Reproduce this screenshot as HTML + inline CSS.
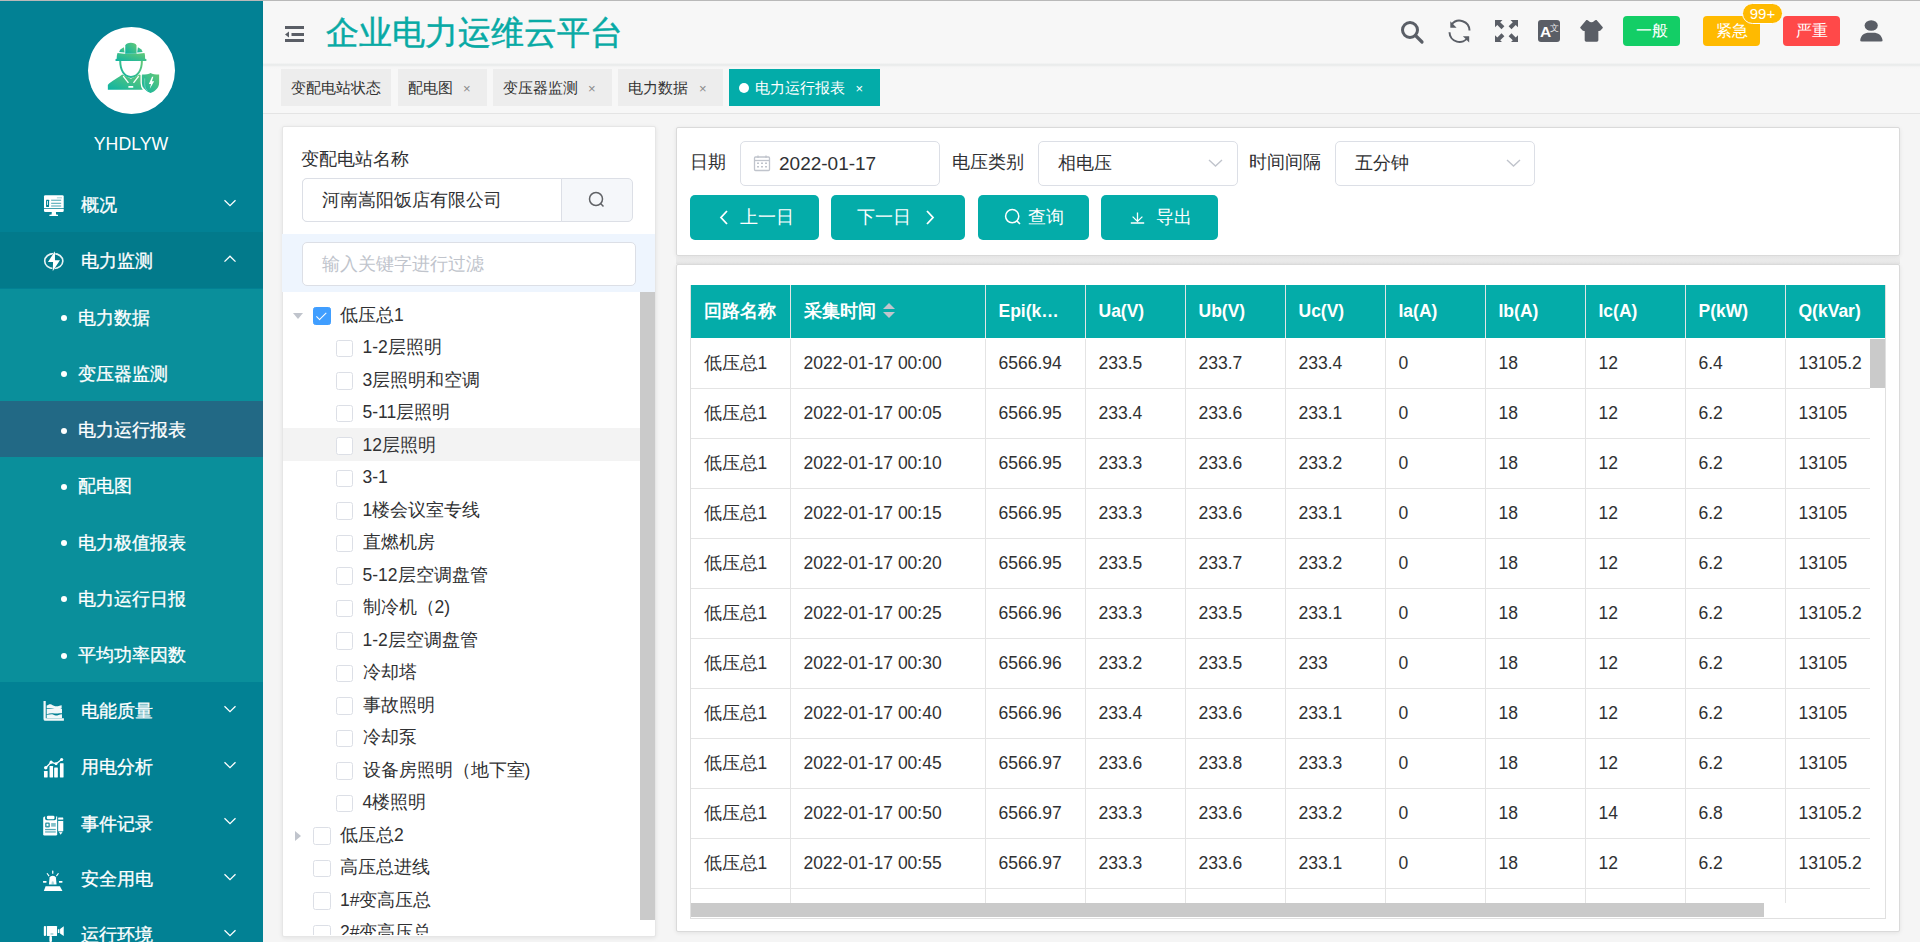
<!DOCTYPE html>
<html><head><meta charset="utf-8"><title>企业电力运维云平台</title>
<style>
*{box-sizing:border-box;margin:0;padding:0}
html,body{width:1920px;height:942px;overflow:hidden}
body{font-family:"Liberation Sans",sans-serif;background:#f5f5f5;position:relative;color:#303133}
#topline{position:absolute;left:0;top:0;width:1920px;height:1px;background:#b9b9b9;z-index:50}
/* sidebar */
#side{position:absolute;left:0;top:0;width:263px;height:942px;background:#028194;color:#fff;overflow:hidden}
#side .avatar{position:absolute;left:88px;top:26.5px;width:87px;height:87px;border-radius:50%;background:#fff}
#side .av{position:absolute;left:85px;top:24px;width:94px;height:94px}
#side .uname{position:absolute;left:0;width:263px;top:133px;text-align:center;font-size:17.7px;line-height:22px;padding-right:1px}
.mi{position:absolute;left:0;width:263px;height:56.25px}
.mi .t{position:absolute;left:81px;top:1px;line-height:56px;font-size:17.5px;white-space:nowrap;-webkit-text-stroke:.3px #fff}
.mi svg.ic{position:absolute;left:40px;top:14px;width:30px;height:30px}
.mi svg.ar{position:absolute;left:222px;top:21.6px;width:16px;height:10px}
.sub{background:#0a8f9b}
.sub .t{left:78px}
.sub .dot{position:absolute;left:61px;top:26.5px;width:6px;height:6px;border-radius:50%;background:#fff}
/* header */
#header{position:absolute;left:263px;top:1px;width:1657px;height:63px;background:#f7f7f7;box-shadow:0 1px 3px rgba(0,0,0,.08)}
#header .title{position:absolute;left:63px;top:12px;font-size:33px;line-height:40px;color:#08aaa5;white-space:nowrap;-webkit-text-stroke:.5px #08aaa5}
#tabsbar{position:absolute;left:263px;top:63px;width:1657px;height:51px;background:linear-gradient(#f7f7f7 0,#eceeee 1px,#e8eaea 2px,#eff0f0 3px,#f6f6f6 4px,#f7f7f7 6px);border-bottom:1px solid #e4e4e4}
.tab{position:absolute;top:69px;height:37px;background:#ededed;font-size:15px;line-height:37px;color:#333;padding-left:10px;white-space:nowrap}
.tab .x{position:absolute;top:1px;font-size:13px;color:#8a8a8a}
.hbtn{position:absolute;top:15px;height:30px;width:57px;border-radius:4px;color:#fff;font-size:16px;line-height:30px;text-align:center}
/* cards */
.card{position:absolute;background:#fff;border:1px solid #dfdfdf;border-radius:2px;box-shadow:0 1px 4px rgba(0,0,0,.08)}
.lbl{position:absolute;font-size:17.5px;line-height:22px;color:#303133;white-space:nowrap}
.inp{position:absolute;background:#fff;border:1px solid #dcdfe6;border-radius:5px;font-size:17.5px;color:#303133;white-space:nowrap}
/* tree */
.tree{position:absolute;left:282px;top:292px;width:358px;height:642.5px;overflow:hidden}
.tn{position:absolute;left:0;width:358px;height:32.5px}
.tn .hov{position:absolute;left:1px;top:-2px;width:357px;height:33.5px;background:#f3f3f3}
.tri{position:absolute;top:13px;width:0;height:0}
.tri.down{border-left:5px solid transparent;border-right:5px solid transparent;border-top:6px solid #c0c4cc;top:13.5px}
.tri.right{border-top:5px solid transparent;border-bottom:5px solid transparent;border-left:6px solid #c0c4cc;top:11px}
.cb{position:absolute;top:7.5px;width:17.5px;height:17.5px;border:1px solid #dcdfe6;border-radius:2.5px;background:#fff}
.cb.on{background:#409eff;border-color:#409eff}
.cb.on:after{content:"";position:absolute;left:5px;top:1.5px;width:4px;height:8.5px;border:1.5px solid #fff;border-left:0;border-top:0;transform:rotate(45deg)}
.tt{position:absolute;top:-1px;line-height:32.5px;font-size:17.5px;color:#303133;white-space:nowrap}
.tscroll{position:absolute;left:640px;top:292px;width:15px;height:628px;background:#cacaca}
/* buttons */
.btn{position:absolute;top:195px;height:45px;background:#04aca9;border-radius:5px;color:#fff;font-size:17.5px;line-height:45px;white-space:nowrap}
/* table */
.tbl{position:absolute;left:690px;top:284.5px;width:1196px;height:634px;background:#fff;overflow:hidden}
.tbl .bl{position:absolute;left:0;top:0;width:1px;height:634px;background:#e0e0e0}
.tbl .br{position:absolute;left:1195px;top:0;width:1px;height:634px;background:#e0e0e0}
.tbl .bb{position:absolute;left:0;top:633px;width:1196px;height:1px;background:#e0e0e0}
.thead{position:absolute;left:0;top:0;width:1196px;height:53.5px;background:#04aca9}
.th{position:absolute;top:0;height:53.5px;color:#fff;font-weight:bold;font-size:17.5px;line-height:53px;padding-left:13.5px;white-space:nowrap}
.thl{position:absolute;top:0;width:1px;height:53.5px;background:#e2e6e6}
.sort{position:absolute;left:93px;top:18.5px;width:12px;height:16px}
.sort i{position:absolute;left:0;width:0;height:0;border-left:6px solid transparent;border-right:6px solid transparent}
.sort i.up{top:0;border-bottom:6px solid #c0c4cc}
.sort i.dn{top:9px;border-top:6px solid #c0c4cc}
.tbody{position:absolute;left:0;top:54.5px;width:1196px;height:564px;overflow:hidden}
.tr{position:absolute;left:0;width:1180px;height:50px;border-bottom:1px solid #e4e4e4}
.td{position:absolute;top:0;height:50px;line-height:49px;font-size:17.5px;color:#303133;padding-left:13.5px;white-space:nowrap}
.vl{position:absolute;top:0;width:1px;height:565px;background:#e4e4e4}
.vthumb{position:absolute;left:1180px;top:0;width:15px;height:49px;background:#cacaca}
.hscroll{position:absolute;left:1px;top:618.5px;width:1073px;height:14px;background:#cacaca}

</style></head><body>
<div id="topline"></div>
<div id="side">
  <div class="avatar"></div>
  <svg class="av" viewBox="0 0 942 942">
    <defs><linearGradient id="g1" x1="0" y1="1" x2="1" y2="0"><stop offset="0" stop-color="#0db3a3"/><stop offset="1" stop-color="#66c976"/></linearGradient></defs>
    <g fill="url(#g1)">
      <path d="M306,350 L318,348 C318,322 320,305 326,290 L392,297 L398,299 L522,299 L528,297 L596,290 C602,305 602,322 602,348 L615,350 L615,372 L306,372 Z"/>
      <path d="M403,297 L404,215 C410,195 430,187 460,187 C490,187 510,195 516,215 L517,297 Z"/>
      <path d="M343,280 C347,260 365,243 390,232 L397,285 Z"/>
      <path d="M577,280 C573,260 555,243 530,232 L523,285 Z"/>
      <path d="M343,371 C343,462 385,540 460,540 C537,540 580,462 580,371 L560,371 C560,450 527,520 460,520 C396,520 363,450 363,371 Z"/>
      <path d="M229,658 L229,612 C245,585 300,562 373,507 L460,548 L548,507 C563,514 573,518 585,522 L585,658 Z"/>
      <path d="M572,507 C610,507 640,500 657,490 C675,500 705,507 743,507 L743,587 C743,640 705,676 657,692 C610,676 572,640 572,587 Z"/>
    </g>
    <g stroke="#fff" fill="none">
      <path d="M383,522 L435,590" stroke-width="13"/><path d="M538,522 L486,590" stroke-width="13"/>
      <path d="M563,498 L563,590 C563,642 600,684 652,704" stroke-width="13"/>
      <path d="M598,545 L598,598 C598,636 612,660 632,676" stroke-width="5" opacity=".6"/>
    </g>
    <rect x="434" y="622" width="50" height="18" rx="5" fill="#fff"/>
    <path d="M672,528 L640,602 L661,602 L650,648 L693,574 L671,574 L685,528 Z" fill="#fff"/>
  </svg>
  <div class="uname">YHDLYW</div>

  <div class="mi" style="top:176px">
    <svg class="ic" viewBox="0 0 942 942"><g fill="#fff">
      <path d="M165,165 L705,165 Q745,165 745,205 L745,570 L125,570 L125,205 Q125,165 165,165 Z"/>
      <path d="M125,595 L745,595 L745,650 Q745,690 705,690 L165,690 Q125,690 125,650 Z"/>
      <path d="M370,690 L500,690 L505,770 L565,775 L565,815 L295,815 L295,775 L365,770 Z"/>
      </g><g fill="#028194">
      <rect x="190" y="310" width="95" height="220" rx="15"/>
      <rect x="350" y="305" width="315" height="32" opacity=".7"/>
      <rect x="350" y="400" width="315" height="38" opacity=".6"/>
      <rect x="350" y="480" width="315" height="45" opacity=".5"/>
      <rect x="530" y="228" width="160" height="35" opacity=".35"/>
      </g><rect x="225" y="345" width="25" height="125" fill="#fff"/>
    </svg>
    <span class="t">概况</span>
    <svg class="ar" viewBox="0 0 16 10"><path d="M2.5,2.2 L8,7.6 L13.5,2.2" stroke="#fff" stroke-width="1.3" fill="none"/></svg>
  </div>
  <div class="mi" style="top:232px;background:#027a8b">
    <svg class="ic" viewBox="0 0 942 942">
      <ellipse cx="432" cy="472" rx="285" ry="235" stroke="#fff" stroke-width="52" fill="none" opacity=".9"/>
      <path d="M480,140 L215,520 L395,520 L385,820 L660,430 L480,430 Z" fill="#027a8b"/>
      <path d="M470,165 L250,500 L410,500 L400,790 L625,450 L470,450 Z" fill="#fff"/>
    </svg>
    <span class="t">电力监测</span>
    <svg class="ar" viewBox="0 0 16 10"><path d="M2.5,7.6 L8,2.2 L13.5,7.6" stroke="#fff" stroke-width="1.3" fill="none"/></svg>
  </div>
  <div class="mi sub" style="top:288.5px"><span class="dot"></span><span class="t">电力数据</span></div>
  <div class="mi sub" style="top:344.75px"><span class="dot"></span><span class="t">变压器监测</span></div>
  <div class="mi sub" style="top:401px;background:#226985"><span class="dot"></span><span class="t">电力运行报表</span></div>
  <div class="mi sub" style="top:457.25px"><span class="dot"></span><span class="t">配电图</span></div>
  <div class="mi sub" style="top:513.5px"><span class="dot"></span><span class="t">电力极值报表</span></div>
  <div class="mi sub" style="top:569.75px"><span class="dot"></span><span class="t">电力运行日报</span></div>
  <div class="mi sub" style="top:626px"><span class="dot"></span><span class="t">平均功率因数</span></div>

  <div class="mi" style="top:682px">
    <svg class="ic" viewBox="0 0 942 942"><g fill="#fff" opacity=".95">
      <path d="M110,160 L180,160 L180,700 L750,700 L750,780 L170,780 Q110,780 110,720 Z"/>
      <path d="M210,300 C260,270 310,240 360,265 C420,300 470,330 560,320 C600,315 620,290 680,290 L680,390 C600,420 520,430 460,410 C380,380 300,380 210,385 Z"/>
      <path d="M210,410 L690,410 L690,545 C640,540 600,545 560,550 C500,560 440,540 380,545 C320,550 270,555 210,570 Z"/>
      <path d="M210,590 C270,585 320,580 370,575 C430,570 450,620 500,615 C560,610 600,580 690,570 L690,690 L210,690 Z"/>
    </g></svg>
    <span class="t">电能质量</span>
    <svg class="ar" viewBox="0 0 16 10"><path d="M2.5,2.2 L8,7.6 L13.5,2.2" stroke="#fff" stroke-width="1.3" fill="none"/></svg>
  </div>
  <div class="mi" style="top:738.25px">
    <svg class="ic" viewBox="0 0 942 942"><g fill="#fff">
      <rect x="125" y="600" width="115" height="200" rx="12"/>
      <rect x="300" y="440" width="110" height="360" rx="12"/>
      <rect x="445" y="490" width="115" height="310" rx="12"/>
      <rect x="625" y="350" width="115" height="450" rx="12"/>
      <circle cx="180" cy="495" r="55"/><circle cx="350" cy="320" r="50"/><circle cx="505" cy="370" r="45"/><circle cx="680" cy="235" r="50"/>
      </g><path d="M180,495 L350,320 L505,370 L680,235" stroke="#fff" stroke-width="40" fill="none" stroke-linejoin="round"/>
    </svg>
    <span class="t">用电分析</span>
    <svg class="ar" viewBox="0 0 16 10"><path d="M2.5,2.2 L8,7.6 L13.5,2.2" stroke="#fff" stroke-width="1.3" fill="none"/></svg>
  </div>
  <div class="mi" style="top:794.5px">
    <svg class="ic" viewBox="0 0 942 942"><g fill="#fff">
      <path d="M150,235 L540,235 L540,790 Q540,830 500,830 L140,830 Q100,830 100,790 L100,285 Q100,235 150,235 Z"/>
      <rect x="570" y="270" width="160" height="70" rx="10"/>
      <path d="M570,370 L730,370 L730,690 L650,810 L570,690 Z"/>
      </g><g fill="#028194">
      <rect x="160" y="190" width="345" height="165" rx="55"/>
      <rect x="160" y="420" width="150" height="160" rx="40" opacity=".8"/>
      <rect x="350" y="440" width="145" height="115" opacity=".5"/>
      <rect x="160" y="625" width="335" height="40" opacity=".7"/>
      <rect x="160" y="695" width="335" height="50" opacity=".5"/>
      <rect x="570" y="340" width="160" height="30"/>
      <rect x="570" y="690" width="160" height="40" opacity=".6"/>
      </g><g fill="#fff">
      <rect x="215" y="215" width="240" height="110" rx="40"/>
      <circle cx="235" cy="500" r="35"/>
    </g></svg>
    <span class="t">事件记录</span>
    <svg class="ar" viewBox="0 0 16 10"><path d="M2.5,2.2 L8,7.6 L13.5,2.2" stroke="#fff" stroke-width="1.3" fill="none"/></svg>
  </div>
  <div class="mi" style="top:850px">
    <svg class="ic" viewBox="0 0 942 942"><g fill="#fff">
      <path d="M280,640 L300,420 Q320,370 400,370 Q480,370 500,420 L520,640 Z"/>
      <path d="M175,700 L625,700 L705,845 L120,845 Z"/>
      <rect x="380" y="205" width="40" height="105" rx="12"/>
      <path d="M205,300 L235,280 L300,370 L270,390 Z"/><path d="M595,300 L565,280 L500,370 L530,390 Z"/>
      <rect x="95" y="530" width="110" height="55" rx="10"/><rect x="595" y="530" width="110" height="55" rx="10"/>
      </g><path d="M360,640 L370,560 Q400,530 430,560 L440,640 Z" fill="#028194" opacity=".35"/>
    </svg>
    <span class="t">安全用电</span>
    <svg class="ar" viewBox="0 0 16 10"><path d="M2.5,2.2 L8,7.6 L13.5,2.2" stroke="#fff" stroke-width="1.3" fill="none"/></svg>
  </div>
  <div class="mi" style="top:906px">
    <svg class="ic" viewBox="0 0 942 942"><g fill="#fff">
      <rect x="120" y="190" width="70" height="310" rx="30"/>
      <rect x="215" y="190" width="320" height="310" rx="15"/>
      <rect x="560" y="290" width="50" height="120" rx="10"/>
      <path d="M630,280 L745,200 L745,500 L630,420 Z"/>
      <rect x="295" y="500" width="80" height="190" rx="30"/>
      </g><rect x="330" y="430" width="90" height="18" fill="#028194"/>
    </svg>
    <span class="t">运行环境</span>
    <svg class="ar" viewBox="0 0 16 10"><path d="M2.5,2.2 L8,7.6 L13.5,2.2" stroke="#fff" stroke-width="1.3" fill="none"/></svg>
  </div>
</div>

<div id="header">
  <svg style="position:absolute;left:21px;top:24px;width:21px;height:18px" viewBox="0 0 21 18">
    <g fill="#5a5e66"><rect x="1" y="1" width="19" height="3"/><rect x="7.5" y="8" width="12.5" height="3"/><rect x="1" y="14" width="19" height="3"/><path d="M1,9.5 L5,6.5 L5,12.5 Z"/></g>
  </svg>
  <div class="title">企业电力运维云平台</div>
  <!-- search -->
  <svg style="position:absolute;left:1137px;top:19px;width:26px;height:26px" viewBox="0 0 26 26">
    <circle cx="10" cy="10" r="7.5" stroke="#5a5e66" stroke-width="3" fill="none"/>
    <path d="M15.5,15.5 L22,22" stroke="#5a5e66" stroke-width="3.2" stroke-linecap="round"/>
  </svg>
  <!-- refresh -->
  <svg style="position:absolute;left:1184px;top:17px;width:26px;height:26px" viewBox="0 0 26 26">
    <path d="M2.5,14.2 A10,10 0 0 0 21,19.2" stroke="#5a5e66" stroke-width="2" fill="none"/>
    <path d="M22.5,12.6 A10,10 0 0 0 4.6,6.6" stroke="#5a5e66" stroke-width="2" fill="none"/>
    <path d="M3.3,3.3 L3.3,9.8 L9.6,9.8 Z" fill="#5a5e66"/>
    <path d="M22.2,24.6 L22.2,18.3 L15.9,18.3 Z" fill="#5a5e66"/>
  </svg>
  <!-- fullscreen -->
  <svg style="position:absolute;left:1232px;top:18.7px;width:23px;height:22.5px" viewBox="0 0 23 23" preserveAspectRatio="none">
    <g fill="#5a5e66">
      <path d="M0,0 L7.5,0 L5.2,2.3 L9.4,6.5 L6.5,9.4 L2.3,5.2 L0,7.5 Z"/>
      <path d="M23,0 L15.5,0 L17.8,2.3 L13.6,6.5 L16.5,9.4 L20.7,5.2 L23,7.5 Z"/>
      <path d="M0,23 L7.5,23 L5.2,20.7 L9.4,16.5 L6.5,13.6 L2.3,17.8 L0,15.5 Z"/>
      <path d="M23,23 L15.5,23 L17.8,20.7 L13.6,16.5 L16.5,13.6 L20.7,17.8 L23,15.5 Z"/>
    </g>
  </svg>
  <!-- translate -->
  <div style="position:absolute;left:1275px;top:19px;width:22px;height:22px;background:#5a5e66;border-radius:3px"></div>
  <div style="position:absolute;left:1275.6px;top:20.5px;font-size:15.5px;line-height:20px;color:#fff;font-weight:bold;width:14px;text-align:center">A</div>
  <div style="position:absolute;left:1286.5px;top:21px;font-size:8.5px;line-height:12px;color:#fff;opacity:.85">文</div>
  <!-- shirt -->
  <svg style="position:absolute;left:1307px;top:9px;width:40px;height:40px" viewBox="0 0 942 942">
    <path d="M385,238 Q410,228 440,258 Q470,288 505,288 Q540,288 570,258 Q600,228 625,238 L768,398 Q782,413 767,430 L718,484 Q703,500 668,494 L668,712 Q668,746 632,746 L382,746 Q346,746 346,712 L346,494 Q311,500 296,484 L247,430 Q232,413 246,398 Z" fill="#5a5e66"/>
  </svg>
  <div class="hbtn" style="left:1360px;background:#13ce66">一般</div>
  <div class="hbtn" style="left:1440px;background:#ffba00">紧急</div>
  <div style="position:absolute;left:1479px;top:2px;width:41px;height:20.5px;border-radius:10.5px;background:#ffba00;border:1px solid #fff;color:#fff;font-size:15px;line-height:19px;text-align:center">99+</div>
  <div class="hbtn" style="left:1520px;background:#ff4949">严重</div>
  <!-- user -->
  <svg style="position:absolute;left:1596px;top:18px;width:25px;height:25px" viewBox="0 0 25 25">
    <ellipse cx="12.2" cy="6.5" rx="6.6" ry="5.3" fill="#5a5e66"/>
    <path d="M1.2,21.2 C1.8,16 5.5,13.7 10,13.7 L14.5,13.7 C19,13.7 22.8,16 23.6,21.2 Q23.8,22.6 22,22.6 L3,22.6 Q1,22.6 1.2,21.2 Z" fill="#5a5e66"/>
  </svg>
</div>
<div id="tabsbar"></div>
<div class="tab" style="left:281px;width:110px">变配电站状态</div>
<div class="tab" style="left:398px;width:89px">配电图<span class="x" style="left:65px">×</span></div>
<div class="tab" style="left:493px;width:119px">变压器监测<span class="x" style="left:95px">×</span></div>
<div class="tab" style="left:618px;width:105px">电力数据<span class="x" style="left:81px">×</span></div>
<div class="tab" style="left:729px;width:151px;background:#03aca9;color:#fff;padding-left:26px"><span style="position:absolute;left:10px;top:14px;width:10px;height:10px;border-radius:50%;background:#fff"></span>电力运行报表<span class="x" style="left:126.5px;color:#fff">×</span></div>

<div class="card" style="left:281.5px;top:126px;width:374.5px;height:810.5px;border-color:#e6e6e6"></div>
<div class="lbl" style="left:301px;top:148px">变配电站名称</div>
<div class="inp" style="left:301.5px;top:177.5px;width:331px;height:44px;background:#f5f7fa"></div>
<div class="inp" style="left:301.5px;top:177.5px;width:260px;height:44px;border-radius:5px 0 0 5px;line-height:42px;padding-left:19px">河南嵩阳饭店有限公司</div>
<svg style="position:absolute;left:588px;top:191px;width:18px;height:18px" viewBox="0 0 18 18">
  <circle cx="8" cy="8" r="6.5" stroke="#606266" stroke-width="1.5" fill="none"/><path d="M12.8,12.8 L15.5,15.5" stroke="#606266" stroke-width="1.5"/>
</svg>
<div style="position:absolute;left:282px;top:234px;width:373px;height:58px;background:#eef5fe"></div>
<div class="inp" style="left:301.5px;top:241.5px;width:334px;height:44px;line-height:42px;padding-left:19px;color:#c0c4cc">输入关键字进行过滤</div>

<div class="tree">
<div class="tn" style="top:7.6px"><span class="tri down" style="left:11.0px"></span><span class="cb on" style="left:31.0px"></span><span class="tt" style="left:58.0px">低压总1</span></div>
<div class="tn" style="top:40.1px"><span class="cb" style="left:53.5px"></span><span class="tt" style="left:80.5px">1-2层照明</span></div>
<div class="tn" style="top:72.6px"><span class="cb" style="left:53.5px"></span><span class="tt" style="left:80.5px">3层照明和空调</span></div>
<div class="tn" style="top:105.1px"><span class="cb" style="left:53.5px"></span><span class="tt" style="left:80.5px">5-11层照明</span></div>
<div class="tn" style="top:137.6px"><div class="hov"></div><span class="cb" style="left:53.5px"></span><span class="tt" style="left:80.5px">12层照明</span></div>
<div class="tn" style="top:170.1px"><span class="cb" style="left:53.5px"></span><span class="tt" style="left:80.5px">3-1</span></div>
<div class="tn" style="top:202.6px"><span class="cb" style="left:53.5px"></span><span class="tt" style="left:80.5px">1楼会议室专线</span></div>
<div class="tn" style="top:235.1px"><span class="cb" style="left:53.5px"></span><span class="tt" style="left:80.5px">直燃机房</span></div>
<div class="tn" style="top:267.6px"><span class="cb" style="left:53.5px"></span><span class="tt" style="left:80.5px">5-12层空调盘管</span></div>
<div class="tn" style="top:300.1px"><span class="cb" style="left:53.5px"></span><span class="tt" style="left:80.5px">制冷机（2)</span></div>
<div class="tn" style="top:332.6px"><span class="cb" style="left:53.5px"></span><span class="tt" style="left:80.5px">1-2层空调盘管</span></div>
<div class="tn" style="top:365.1px"><span class="cb" style="left:53.5px"></span><span class="tt" style="left:80.5px">冷却塔</span></div>
<div class="tn" style="top:397.6px"><span class="cb" style="left:53.5px"></span><span class="tt" style="left:80.5px">事故照明</span></div>
<div class="tn" style="top:430.1px"><span class="cb" style="left:53.5px"></span><span class="tt" style="left:80.5px">冷却泵</span></div>
<div class="tn" style="top:462.6px"><span class="cb" style="left:53.5px"></span><span class="tt" style="left:80.5px">设备房照明（地下室)</span></div>
<div class="tn" style="top:495.1px"><span class="cb" style="left:53.5px"></span><span class="tt" style="left:80.5px">4楼照明</span></div>
<div class="tn" style="top:527.6px"><span class="tri right" style="left:13.0px"></span><span class="cb" style="left:31.0px"></span><span class="tt" style="left:58.0px">低压总2</span></div>
<div class="tn" style="top:560.1px"><span class="cb" style="left:31.0px"></span><span class="tt" style="left:58.0px">高压总进线</span></div>
<div class="tn" style="top:592.6px"><span class="cb" style="left:31.0px"></span><span class="tt" style="left:58.0px">1#变高压总</span></div>
<div class="tn" style="top:625.1px"><span class="cb" style="left:31.0px"></span><span class="tt" style="left:58.0px">2#变高压总</span></div>
</div>
<div class="tscroll"></div>
<div style="position:absolute;left:676px;top:256px;width:1224px;height:8px;background:linear-gradient(#f1f1f1,#e6e6e6)"></div>
<div class="card" style="left:675.5px;top:126.5px;width:1224.5px;height:129.5px;border-color:#dadada"></div>
<div class="card" style="left:675.5px;top:263.5px;width:1224.5px;height:668px;border-color:#dadada"></div>
<div class="lbl" style="left:690px;top:151px">日期</div>
<div class="inp" style="left:740px;top:141px;width:200px;height:44.5px;line-height:43px;padding-left:38px;font-size:19px">2022-01-17</div>
<svg style="position:absolute;left:753px;top:154px;width:18px;height:18px" viewBox="0 0 18 18">
  <rect x="1.5" y="3" width="15" height="13.5" rx="1" stroke="#c0c4cc" stroke-width="1.3" fill="none"/>
  <path d="M1.5,6.5 L16.5,6.5" stroke="#c0c4cc" stroke-width="1.3"/>
  <path d="M5,1.5 L5,4 M13,1.5 L13,4" stroke="#c0c4cc" stroke-width="1.3"/>
  <g fill="#c0c4cc"><rect x="4" y="8.5" width="2" height="1.5"/><rect x="8" y="8.5" width="2" height="1.5"/><rect x="12" y="8.5" width="2" height="1.5"/><rect x="4" y="12" width="2" height="1.5"/><rect x="8" y="12" width="2" height="1.5"/><rect x="12" y="12" width="2" height="1.5"/></g>
</svg>
<div class="lbl" style="left:952px;top:151px">电压类别</div>
<div class="inp" style="left:1038px;top:141px;width:200px;height:44.5px;line-height:42px;padding-left:19px">相电压</div>
<svg style="position:absolute;left:1207px;top:157px;width:17px;height:12px" viewBox="0 0 17 12"><path d="M2,3 L8.5,9 L15,3" stroke="#c0c4cc" stroke-width="1.4" fill="none"/></svg>
<div class="lbl" style="left:1249px;top:151px">时间间隔</div>
<div class="inp" style="left:1335px;top:141px;width:200px;height:44.5px;line-height:42px;padding-left:19px">五分钟</div>
<svg style="position:absolute;left:1505px;top:157px;width:17px;height:12px" viewBox="0 0 17 12"><path d="M2,3 L8.5,9 L15,3" stroke="#c0c4cc" stroke-width="1.4" fill="none"/></svg>

<div class="btn" style="left:690px;width:129px">
  <svg style="position:absolute;left:28px;top:14px;width:12px;height:17px" viewBox="0 0 12 17"><path d="M9,2 L3,8.5 L9,15" stroke="#fff" stroke-width="1.8" fill="none"/></svg>
  <span style="position:absolute;left:50px">上一日</span></div>
<div class="btn" style="left:831px;width:134px">
  <span style="position:absolute;left:26px">下一日</span>
  <svg style="position:absolute;left:93px;top:14px;width:12px;height:17px" viewBox="0 0 12 17"><path d="M3,2 L9,8.5 L3,15" stroke="#fff" stroke-width="1.8" fill="none"/></svg></div>
<div class="btn" style="left:978px;width:111px">
  <svg style="position:absolute;left:26px;top:12.5px;width:18px;height:18px" viewBox="0 0 18 18"><circle cx="8.2" cy="8.2" r="6.6" stroke="#fff" stroke-width="1.5" fill="none"/><path d="M12.9,12.9 L16,16" stroke="#fff" stroke-width="1.6"/></svg>
  <span style="position:absolute;left:50px">查询</span></div>
<div class="btn" style="left:1101px;width:117px">
  <svg style="position:absolute;left:27.5px;top:15px;width:17px;height:17px" viewBox="0 0 17 17"><path d="M8.5,2.6 L8.5,11.2 M3.6,6.6 L8.5,11.4 L13.4,6.6 M1.8,13 L15.2,13" stroke="#fff" stroke-width="1.3" fill="none"/></svg>
  <span style="position:absolute;left:55px">导出</span></div>

<div class="tbl">
  <div class="thead">
<div class="th" style="left:0px;width:100px"><span>回路名称</span></div>
<div class="th" style="left:100px;width:195px"><span>采集时间</span><span class="sort"><i class="up"></i><i class="dn"></i></span></div>
<div class="thl" style="left:100px"></div>
<div class="th" style="left:295px;width:100px"><span>Epi(k…</span></div>
<div class="thl" style="left:295px"></div>
<div class="th" style="left:395px;width:100px"><span>Ua(V)</span></div>
<div class="thl" style="left:395px"></div>
<div class="th" style="left:495px;width:100px"><span>Ub(V)</span></div>
<div class="thl" style="left:495px"></div>
<div class="th" style="left:595px;width:100px"><span>Uc(V)</span></div>
<div class="thl" style="left:595px"></div>
<div class="th" style="left:695px;width:100px"><span>Ia(A)</span></div>
<div class="thl" style="left:695px"></div>
<div class="th" style="left:795px;width:100px"><span>Ib(A)</span></div>
<div class="thl" style="left:795px"></div>
<div class="th" style="left:895px;width:100px"><span>Ic(A)</span></div>
<div class="thl" style="left:895px"></div>
<div class="th" style="left:995px;width:100px"><span>P(kW)</span></div>
<div class="thl" style="left:995px"></div>
<div class="th" style="left:1095px;width:100px"><span>Q(kVar)</span></div>
<div class="thl" style="left:1095px"></div>
  </div>
  <div class="tbody">
<div class="tr" style="top:0px"><div class="td" style="left:0px;width:100px">低压总1</div><div class="td" style="left:100px;width:195px">2022-01-17 00:00</div><div class="td" style="left:295px;width:100px">6566.94</div><div class="td" style="left:395px;width:100px">233.5</div><div class="td" style="left:495px;width:100px">233.7</div><div class="td" style="left:595px;width:100px">233.4</div><div class="td" style="left:695px;width:100px">0</div><div class="td" style="left:795px;width:100px">18</div><div class="td" style="left:895px;width:100px">12</div><div class="td" style="left:995px;width:100px">6.4</div><div class="td" style="left:1095px;width:100px">13105.2</div></div>
<div class="tr" style="top:50px"><div class="td" style="left:0px;width:100px">低压总1</div><div class="td" style="left:100px;width:195px">2022-01-17 00:05</div><div class="td" style="left:295px;width:100px">6566.95</div><div class="td" style="left:395px;width:100px">233.4</div><div class="td" style="left:495px;width:100px">233.6</div><div class="td" style="left:595px;width:100px">233.1</div><div class="td" style="left:695px;width:100px">0</div><div class="td" style="left:795px;width:100px">18</div><div class="td" style="left:895px;width:100px">12</div><div class="td" style="left:995px;width:100px">6.2</div><div class="td" style="left:1095px;width:100px">13105</div></div>
<div class="tr" style="top:100px"><div class="td" style="left:0px;width:100px">低压总1</div><div class="td" style="left:100px;width:195px">2022-01-17 00:10</div><div class="td" style="left:295px;width:100px">6566.95</div><div class="td" style="left:395px;width:100px">233.3</div><div class="td" style="left:495px;width:100px">233.6</div><div class="td" style="left:595px;width:100px">233.2</div><div class="td" style="left:695px;width:100px">0</div><div class="td" style="left:795px;width:100px">18</div><div class="td" style="left:895px;width:100px">12</div><div class="td" style="left:995px;width:100px">6.2</div><div class="td" style="left:1095px;width:100px">13105</div></div>
<div class="tr" style="top:150px"><div class="td" style="left:0px;width:100px">低压总1</div><div class="td" style="left:100px;width:195px">2022-01-17 00:15</div><div class="td" style="left:295px;width:100px">6566.95</div><div class="td" style="left:395px;width:100px">233.3</div><div class="td" style="left:495px;width:100px">233.6</div><div class="td" style="left:595px;width:100px">233.1</div><div class="td" style="left:695px;width:100px">0</div><div class="td" style="left:795px;width:100px">18</div><div class="td" style="left:895px;width:100px">12</div><div class="td" style="left:995px;width:100px">6.2</div><div class="td" style="left:1095px;width:100px">13105</div></div>
<div class="tr" style="top:200px"><div class="td" style="left:0px;width:100px">低压总1</div><div class="td" style="left:100px;width:195px">2022-01-17 00:20</div><div class="td" style="left:295px;width:100px">6566.95</div><div class="td" style="left:395px;width:100px">233.5</div><div class="td" style="left:495px;width:100px">233.7</div><div class="td" style="left:595px;width:100px">233.2</div><div class="td" style="left:695px;width:100px">0</div><div class="td" style="left:795px;width:100px">18</div><div class="td" style="left:895px;width:100px">12</div><div class="td" style="left:995px;width:100px">6.2</div><div class="td" style="left:1095px;width:100px">13105</div></div>
<div class="tr" style="top:250px"><div class="td" style="left:0px;width:100px">低压总1</div><div class="td" style="left:100px;width:195px">2022-01-17 00:25</div><div class="td" style="left:295px;width:100px">6566.96</div><div class="td" style="left:395px;width:100px">233.3</div><div class="td" style="left:495px;width:100px">233.5</div><div class="td" style="left:595px;width:100px">233.1</div><div class="td" style="left:695px;width:100px">0</div><div class="td" style="left:795px;width:100px">18</div><div class="td" style="left:895px;width:100px">12</div><div class="td" style="left:995px;width:100px">6.2</div><div class="td" style="left:1095px;width:100px">13105.2</div></div>
<div class="tr" style="top:300px"><div class="td" style="left:0px;width:100px">低压总1</div><div class="td" style="left:100px;width:195px">2022-01-17 00:30</div><div class="td" style="left:295px;width:100px">6566.96</div><div class="td" style="left:395px;width:100px">233.2</div><div class="td" style="left:495px;width:100px">233.5</div><div class="td" style="left:595px;width:100px">233</div><div class="td" style="left:695px;width:100px">0</div><div class="td" style="left:795px;width:100px">18</div><div class="td" style="left:895px;width:100px">12</div><div class="td" style="left:995px;width:100px">6.2</div><div class="td" style="left:1095px;width:100px">13105</div></div>
<div class="tr" style="top:350px"><div class="td" style="left:0px;width:100px">低压总1</div><div class="td" style="left:100px;width:195px">2022-01-17 00:40</div><div class="td" style="left:295px;width:100px">6566.96</div><div class="td" style="left:395px;width:100px">233.4</div><div class="td" style="left:495px;width:100px">233.6</div><div class="td" style="left:595px;width:100px">233.1</div><div class="td" style="left:695px;width:100px">0</div><div class="td" style="left:795px;width:100px">18</div><div class="td" style="left:895px;width:100px">12</div><div class="td" style="left:995px;width:100px">6.2</div><div class="td" style="left:1095px;width:100px">13105</div></div>
<div class="tr" style="top:400px"><div class="td" style="left:0px;width:100px">低压总1</div><div class="td" style="left:100px;width:195px">2022-01-17 00:45</div><div class="td" style="left:295px;width:100px">6566.97</div><div class="td" style="left:395px;width:100px">233.6</div><div class="td" style="left:495px;width:100px">233.8</div><div class="td" style="left:595px;width:100px">233.3</div><div class="td" style="left:695px;width:100px">0</div><div class="td" style="left:795px;width:100px">18</div><div class="td" style="left:895px;width:100px">12</div><div class="td" style="left:995px;width:100px">6.2</div><div class="td" style="left:1095px;width:100px">13105</div></div>
<div class="tr" style="top:450px"><div class="td" style="left:0px;width:100px">低压总1</div><div class="td" style="left:100px;width:195px">2022-01-17 00:50</div><div class="td" style="left:295px;width:100px">6566.97</div><div class="td" style="left:395px;width:100px">233.3</div><div class="td" style="left:495px;width:100px">233.6</div><div class="td" style="left:595px;width:100px">233.2</div><div class="td" style="left:695px;width:100px">0</div><div class="td" style="left:795px;width:100px">18</div><div class="td" style="left:895px;width:100px">14</div><div class="td" style="left:995px;width:100px">6.8</div><div class="td" style="left:1095px;width:100px">13105.2</div></div>
<div class="tr" style="top:500px"><div class="td" style="left:0px;width:100px">低压总1</div><div class="td" style="left:100px;width:195px">2022-01-17 00:55</div><div class="td" style="left:295px;width:100px">6566.97</div><div class="td" style="left:395px;width:100px">233.3</div><div class="td" style="left:495px;width:100px">233.6</div><div class="td" style="left:595px;width:100px">233.1</div><div class="td" style="left:695px;width:100px">0</div><div class="td" style="left:795px;width:100px">18</div><div class="td" style="left:895px;width:100px">12</div><div class="td" style="left:995px;width:100px">6.2</div><div class="td" style="left:1095px;width:100px">13105.2</div></div>
<div class="vl" style="left:100px"></div>
<div class="vl" style="left:295px"></div>
<div class="vl" style="left:395px"></div>
<div class="vl" style="left:495px"></div>
<div class="vl" style="left:595px"></div>
<div class="vl" style="left:695px"></div>
<div class="vl" style="left:795px"></div>
<div class="vl" style="left:895px"></div>
<div class="vl" style="left:995px"></div>
<div class="vl" style="left:1095px"></div>
  <div class="vthumb"></div>
  </div>
  <div class="hscroll"></div>
  <div class="bl"></div><div class="br"></div><div class="bb"></div>
</div>
</body></html>
